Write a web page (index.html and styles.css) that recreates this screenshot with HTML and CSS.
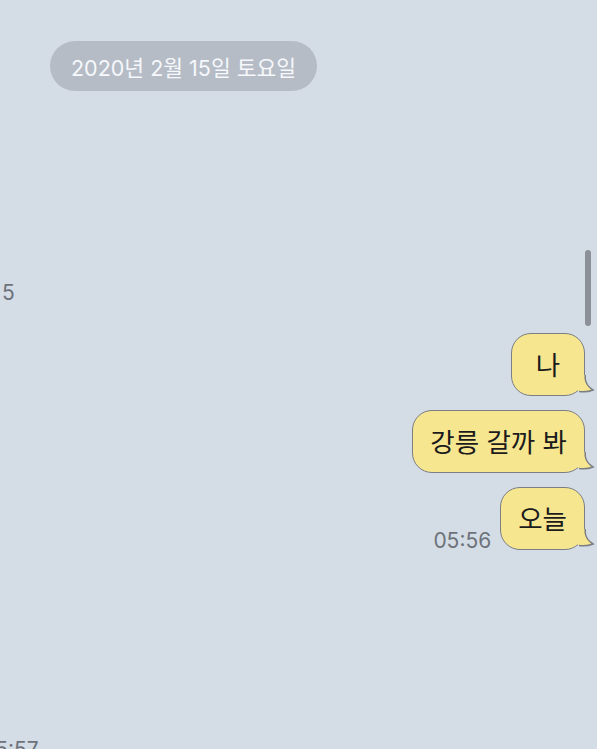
FILE: index.html
```html
<!doctype html>
<html lang="ko">

<head>
    <meta charset="UTF-8" />
    <meta name="viewport" content="width=device-width, initial-scale=1.0" />
    <title>채팅</title>
    <link rel="stylesheet" href="styles.css">
</head>

<body>
    <div class="screen">
        <div class="date-row">
            <span class="date-pill">2020년 2월 15일 토요일</span>
        </div>
        <div class="stray stray--top">5</div>
        <div class="thread">
            <div class="msg">
                <div class="bubble bubble--short">나<svg class="bubble__tail" viewBox="0 0 20 20" width="20" height="20">
                        <path class="bubble__tail-fill" d="M0 0 H9.25 V4 Q10 10.5 17 15 Q11 17.5 3 16.5 L0 14 Z" />
                        <path class="bubble__tail-line" d="M9.25 0 V4 Q10 10.5 17 15 Q11 17.5 3 16.5" />
                    </svg></div>
            </div>
            <div class="msg">
                <div class="bubble">강릉 갈까 봐<svg class="bubble__tail" viewBox="0 0 20 20" width="20" height="20">
                        <path class="bubble__tail-fill" d="M0 0 H9.25 V4 Q10 10.5 17 15 Q11 17.5 3 16.5 L0 14 Z" />
                        <path class="bubble__tail-line" d="M9.25 0 V4 Q10 10.5 17 15 Q11 17.5 3 16.5" />
                    </svg></div>
            </div>
            <div class="msg">
                <span class="msg__time">05:56</span>
                <div class="bubble">오늘<svg class="bubble__tail" viewBox="0 0 20 20" width="20" height="20">
                        <path class="bubble__tail-fill" d="M0 0 H9.25 V4 Q10 10.5 17 15 Q11 17.5 3 16.5 L0 14 Z" />
                        <path class="bubble__tail-line" d="M9.25 0 V4 Q10 10.5 17 15 Q11 17.5 3 16.5" />
                    </svg></div>
            </div>
        </div>
        <div class="stray stray--bottom">05:57</div>
        <div class="scrollbar"></div>
    </div>
</body>

</html>
```

FILE: styles.css
```css
:root {
    --chat-bg: #d4dce6;
    --pill-bg: #b5bcc6;
    --bubble-bg: #f7e690;
    --bubble-line: #7b7e83;
    --time-color: #6d727a;
    --text-color: #1b1b1c;
}

* {
    margin: 0;
    padding: 0;
    box-sizing: border-box;
}

html,
body {
    height: 100%;
}

body {
    font-family: 'Inter', 'Noto Sans CJK KR', sans-serif;
    color: var(--text-color);
    background: var(--chat-bg);
    overflow: hidden;
}

.screen {
    position: relative;
    height: 749px;
    padding-top: 41px;
    overflow: hidden;
}

.date-row {
    display: flex;
    padding-left: 50px;
}

.date-pill {
    display: flex;
    align-items: center;
    height: 50px;
    padding: 0 21px;
    border-radius: 25px;
    background: var(--pill-bg);
    color: #f6f8fb;
    font-size: 21.5px;
    white-space: nowrap;
}

.stray {
    color: var(--time-color);
    font-size: 21px;
    line-height: 24px;
    white-space: nowrap;
}

.stray--top {
    margin-top: 190px;
    padding-left: 2px;
}

.stray--bottom {
    margin-top: 188px;
    margin-left: -18px;
}

.thread {
    display: flex;
    flex-direction: column;
    align-items: flex-end;
    gap: 14px;
    margin-top: 28px;
    padding-right: 12px;
}

.msg {
    display: flex;
    align-items: flex-end;
    gap: 9px;
}

.msg__time {
    color: var(--time-color);
    font-size: 21px;
    line-height: 24px;
    margin-bottom: -3px;
}

.bubble {
    position: relative;
    display: flex;
    align-items: center;
    justify-content: center;
    height: 63px;
    padding: 0 17px 2px;
    border: 1.5px solid var(--bubble-line);
    border-radius: 20px;
    background: var(--bubble-bg);
    font-family: 'Noto Sans CJK KR', sans-serif;
    font-size: 26.5px;
    white-space: nowrap;
}

.bubble--short {
    min-width: 74px;
}

.bubble__tail {
    position: absolute;
    right: -11.5px;
    bottom: 0;
    overflow: visible;
}

.bubble__tail-fill {
    fill: var(--bubble-bg);
}

.bubble__tail-line {
    fill: none;
    stroke: var(--bubble-line);
    stroke-width: 1.5;
}

.scrollbar {
    position: absolute;
    top: 250px;
    right: 6px;
    width: 6px;
    height: 76px;
    border-radius: 3px;
    background: #8c9098;
}
```
